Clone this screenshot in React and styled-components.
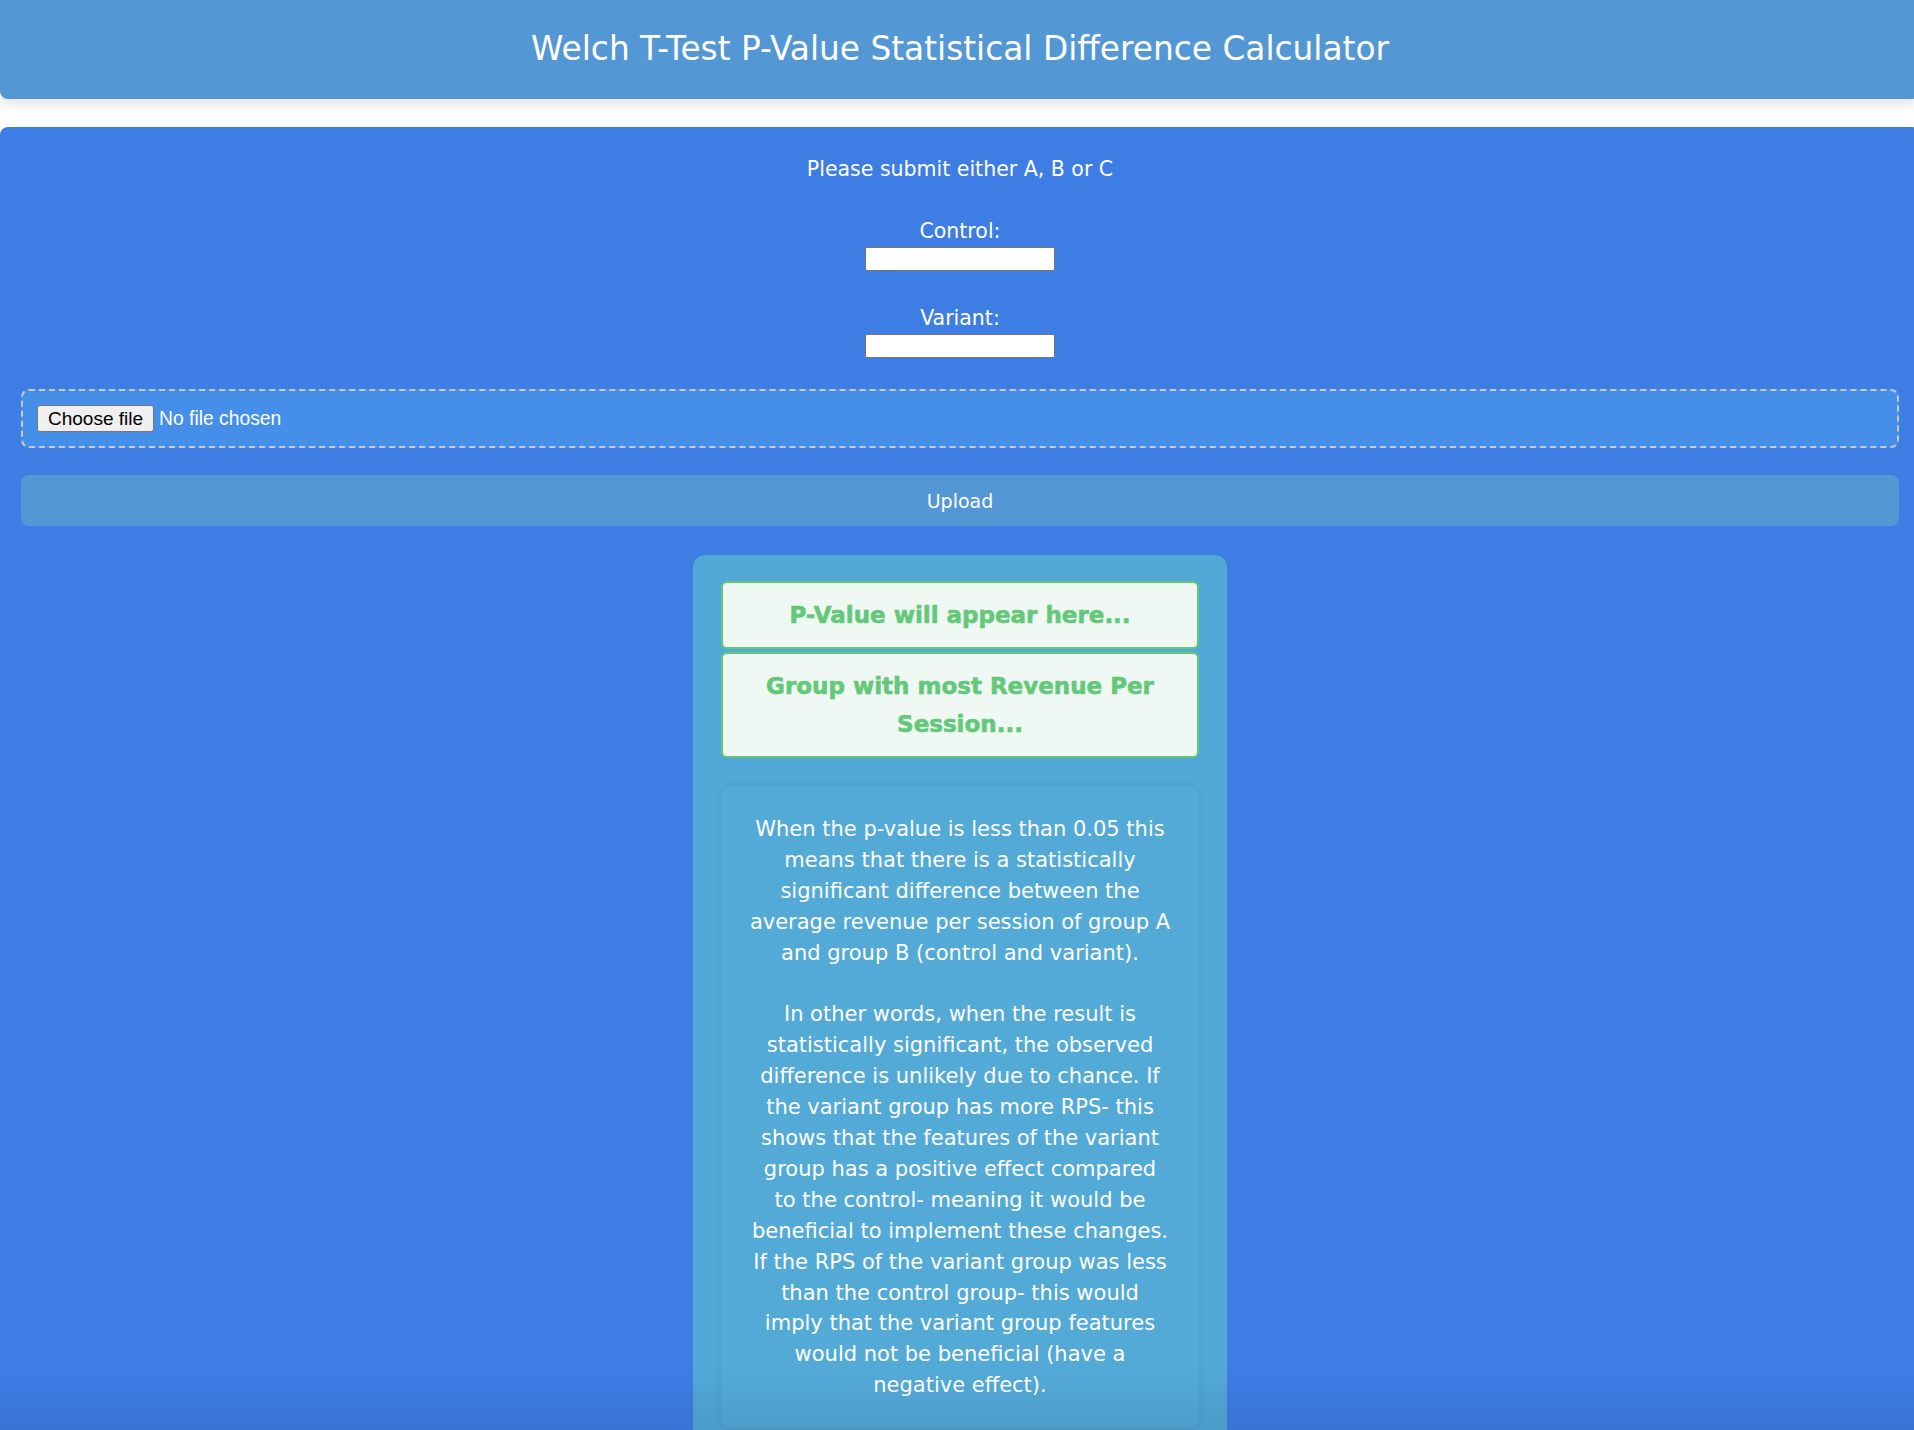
import React from "react";
import styled, { createGlobalStyle } from "styled-components";

const GlobalStyle = createGlobalStyle`
  html,
  body {
    margin: 0;
    padding: 0;
    background: #fff;
    overflow-x: hidden;
  }
  body {
    font-family: "DejaVu Sans", "Noto Sans", sans-serif;
  }
`;

const Page = styled.div`
  width: 1920px;
`;

const Header = styled.header`
  position: relative;
  z-index: 1;
  height: 99px;
  display: flex;
  align-items: center;
  justify-content: center;
  padding-bottom: 2px;
  box-sizing: border-box;
  background: #5397d5;
  border-radius: 0 0 8px 8px;
  box-shadow: 0 4px 14px rgba(0, 0, 0, 0.13);
`;

const Title = styled.h1`
  margin: 0;
  font-size: 32.8px;
  font-weight: 400;
  line-height: 38px;
  color: #fff;
`;

const Main = styled.main`
  margin-top: 28px;
  min-height: 1400px;
  box-sizing: border-box;
  padding: 27px 21px 40px;
  display: flex;
  flex-direction: column;
  align-items: center;
  background: #3e7de4;
  border-radius: 8px 8px 0 0;
`;

const Prompt = styled.p`
  margin: 0;
  font-size: 20.5px;
  line-height: 30px;
  color: #fff;
`;

const Field = styled.div`
  margin-top: 32px;
  display: flex;
  flex-direction: column;
  align-items: center;
  gap: 1px;
`;

const FieldLabel = styled.label`
  font-size: 20.5px;
  line-height: 30px;
  color: #fff;
`;

const TextInput = styled.input`
  width: 190px;
  height: 24px;
  box-sizing: border-box;
  padding: 1px 4px;
  border: 1px solid #767676;
  border-radius: 2px;
  background: #fff;
  font-size: 15px;
`;

const DropZone = styled.label`
  align-self: stretch;
  margin-top: 31px;
  height: 59px;
  box-sizing: border-box;
  padding: 0 14px;
  display: flex;
  align-items: center;
  border: 2px dashed #c9c9cc;
  border-radius: 8px;
  background: #468fe8;
  cursor: pointer;

  input {
    display: none;
  }
`;

const ChooseButton = styled.span`
  display: inline-flex;
  align-items: center;
  height: 27px;
  box-sizing: border-box;
  padding: 0 10px;
  border: 1px solid #767676;
  border-radius: 3px;
  background: #efefef;
  color: #000;
  font-family: "Liberation Sans", Arial, sans-serif;
  font-size: 19px;
`;

const FileStatus = styled.span`
  margin-left: 5px;
  color: #fff;
  font-family: "Liberation Sans", Arial, sans-serif;
  font-size: 19.3px;
`;

const UploadButton = styled.button`
  align-self: stretch;
  margin-top: 27px;
  height: 51px;
  border: none;
  border-radius: 8px;
  background: #5397d5;
  color: #fff;
  font-family: inherit;
  font-size: 19px;
  cursor: pointer;
`;

const ResultCard = styled.section`
  margin-top: 29px;
  width: 534px;
  box-sizing: border-box;
  padding: 26px 28px 27px;
  background: #52a8d6;
  border-radius: 12px;
`;

const ResultBox = styled.div`
  box-sizing: border-box;
  padding: 13px 10px;
  border: 2px solid #64c87a;
  border-radius: 6px;
  background: #eff8f2;
  color: #64c87a;
  text-align: center;
  font-size: 23px;
  font-weight: 700;
  line-height: 38px;
  -webkit-text-stroke: 0.6px #64c87a;

  & + & {
    margin-top: 3px;
  }
`;

const Explanation = styled.div`
  margin-top: 28px;
  padding: 28px 20px 27px;
  border-radius: 12px;
  background: #54aad7;
  box-shadow: 0 0 10px rgba(0, 0, 0, 0.07);
  color: #fff;
  text-align: center;
  font-size: 21px;
  line-height: 30.9px;
  white-space: nowrap;
`;

const Paragraph = styled.p`
  margin: 0;

  & + & {
    margin-top: 30.9px;
  }
`;

const BottomFade = styled.div`
  position: fixed;
  left: 0;
  right: 0;
  bottom: 0;
  height: 60px;
  pointer-events: none;
  background: linear-gradient(to bottom, rgba(0, 0, 40, 0), rgba(0, 0, 40, 0.07));
`;

export default function App() {
  return (
    <Page>
      <GlobalStyle />
      <Header>
        <Title>Welch T-Test P-Value Statistical Difference Calculator</Title>
      </Header>

      <Main>
        <Prompt>Please submit either A, B or C</Prompt>

        <Field>
          <FieldLabel htmlFor="control">Control:</FieldLabel>
          <TextInput id="control" type="text" />
        </Field>
        <Field>
          <FieldLabel htmlFor="variant">Variant:</FieldLabel>
          <TextInput id="variant" type="text" />
        </Field>

        <DropZone>
          <input type="file" />
          <ChooseButton>Choose file</ChooseButton>
          <FileStatus>No file chosen</FileStatus>
        </DropZone>

        <UploadButton type="button">Upload</UploadButton>

        <ResultCard>
          <ResultBox>P-Value will appear here...</ResultBox>
          <ResultBox>Group with most Revenue Per Session...</ResultBox>

          <Explanation>
            <Paragraph>
              When the p-value is less than 0.05 this
              <br />
              means that there is a statistically
              <br />
              significant difference between the
              <br />
              average revenue per session of group A
              <br />
              and group B (control and variant).
            </Paragraph>
            <Paragraph>
              In other words, when the result is
              <br />
              statistically significant, the observed
              <br />
              difference is unlikely due to chance. If
              <br />
              the variant group has more RPS- this
              <br />
              shows that the features of the variant
              <br />
              group has a positive effect compared
              <br />
              to the control- meaning it would be
              <br />
              beneficial to implement these changes.
              <br />
              If the RPS of the variant group was less
              <br />
              than the control group- this would
              <br />
              imply that the variant group features
              <br />
              would not be beneficial (have a
              <br />
              negative effect).
            </Paragraph>
          </Explanation>
        </ResultCard>
      </Main>
      <BottomFade />
    </Page>
  );
}
